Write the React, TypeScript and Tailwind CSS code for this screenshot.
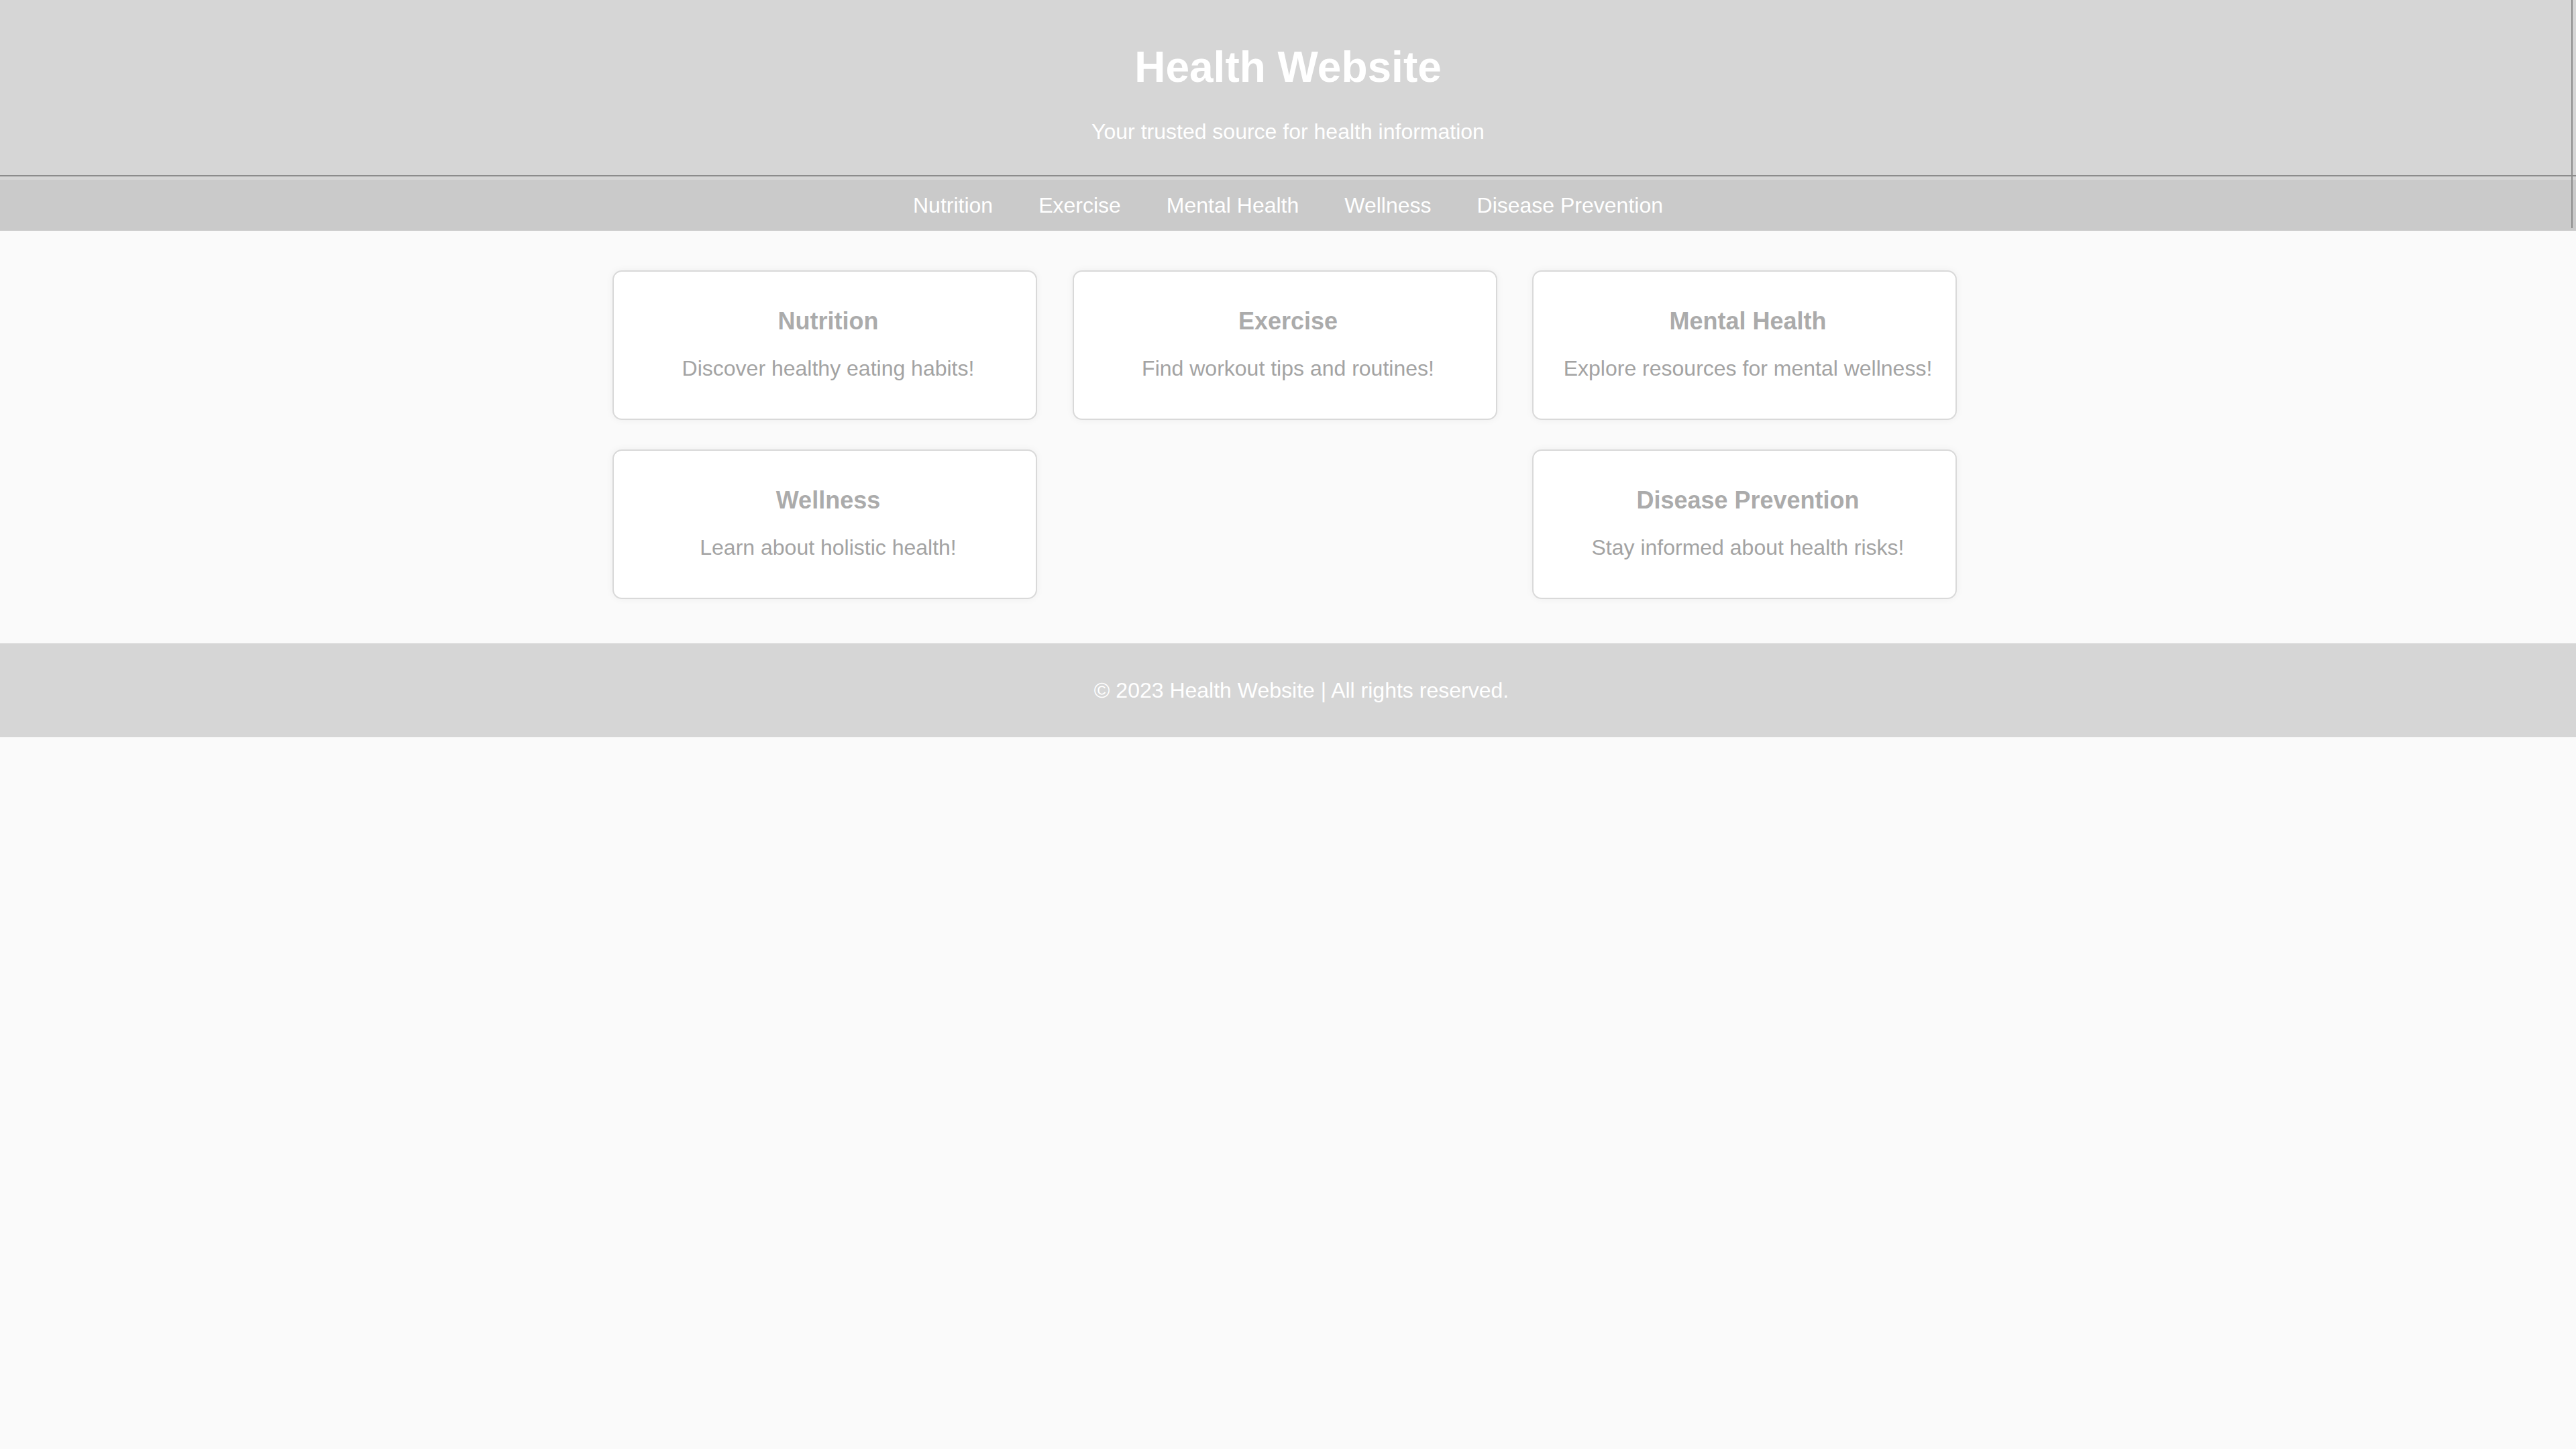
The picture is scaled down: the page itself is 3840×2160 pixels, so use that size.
const navItems = ["Nutrition", "Exercise", "Mental Health", "Wellness", "Disease Prevention"];

const cards = [
  { title: "Nutrition", text: "Discover healthy eating habits!" },
  { title: "Exercise", text: "Find workout tips and routines!" },
  { title: "Mental Health", text: "Explore resources for mental wellness!" },
  { title: "Wellness", text: "Learn about holistic health!" },
  { title: "Disease Prevention", text: "Stay informed about health risks!" },
];

function Card({ title, text }: { title: string; text: string }) {
  return (
    <div className="w-[633px] h-[223px] flex flex-col items-center pt-[53px] pl-[10px] bg-white border-2 border-[#d9d9d9] rounded-[14px] shadow-[0_0_12px_rgba(0,0,0,0.05)]">
      <h3 className="text-[36px] leading-[41px] font-bold text-[#ababab]">{title}</h3>
      <p className="mt-[32px] text-[32px] leading-[37px] text-[#a3a3a3]">{text}</p>
    </div>
  );
}

export default function App() {
  return (
    <div className="min-h-screen bg-[#fafafa] font-['Liberation_Sans',Arial,sans-serif]">
      <div className="relative">
        {/* header */}
        <header className="flex flex-col items-center pt-[63px] pb-[46px] bg-[#d6d6d6] border-b-2 border-[#8c8c8c]">
          <h1 className="text-[64px] leading-[74px] font-bold text-white">Health Website</h1>
          <p className="mt-[41px] text-[32px] leading-[37px] text-white">Your trusted source for health information</p>
        </header>
        <div className="h-[5px] bg-[#d6d6d6]" />

        {/* nav */}
        <nav className="h-[76px] flex items-center justify-center gap-[68px] bg-[#cacaca]">
          {navItems.map((n) => (
            <a key={n} className="text-[32px] leading-[37px] text-white cursor-pointer">
              {n}
            </a>
          ))}
        </nav>

        {/* right edge line */}
        <div className="absolute top-0 right-[5px] w-[2px] h-[340px] bg-[#8c8c8c]" />
      </div>

      {/* cards */}
      <main className="w-[2014px] mx-auto pr-[10px] pt-[59px] pb-[66px] flex flex-wrap justify-between gap-y-[44px]">
        {cards.map((c) => (
          <Card key={c.title} title={c.title} text={c.text} />
        ))}
      </main>

      {/* footer */}
      <footer className="h-[140px] flex items-center justify-center pl-[40px] bg-[#d6d6d6]">
        <p className="text-[32px] leading-[37px] text-white">© 2023 Health Website | All rights reserved.</p>
      </footer>
    </div>
  );
}
